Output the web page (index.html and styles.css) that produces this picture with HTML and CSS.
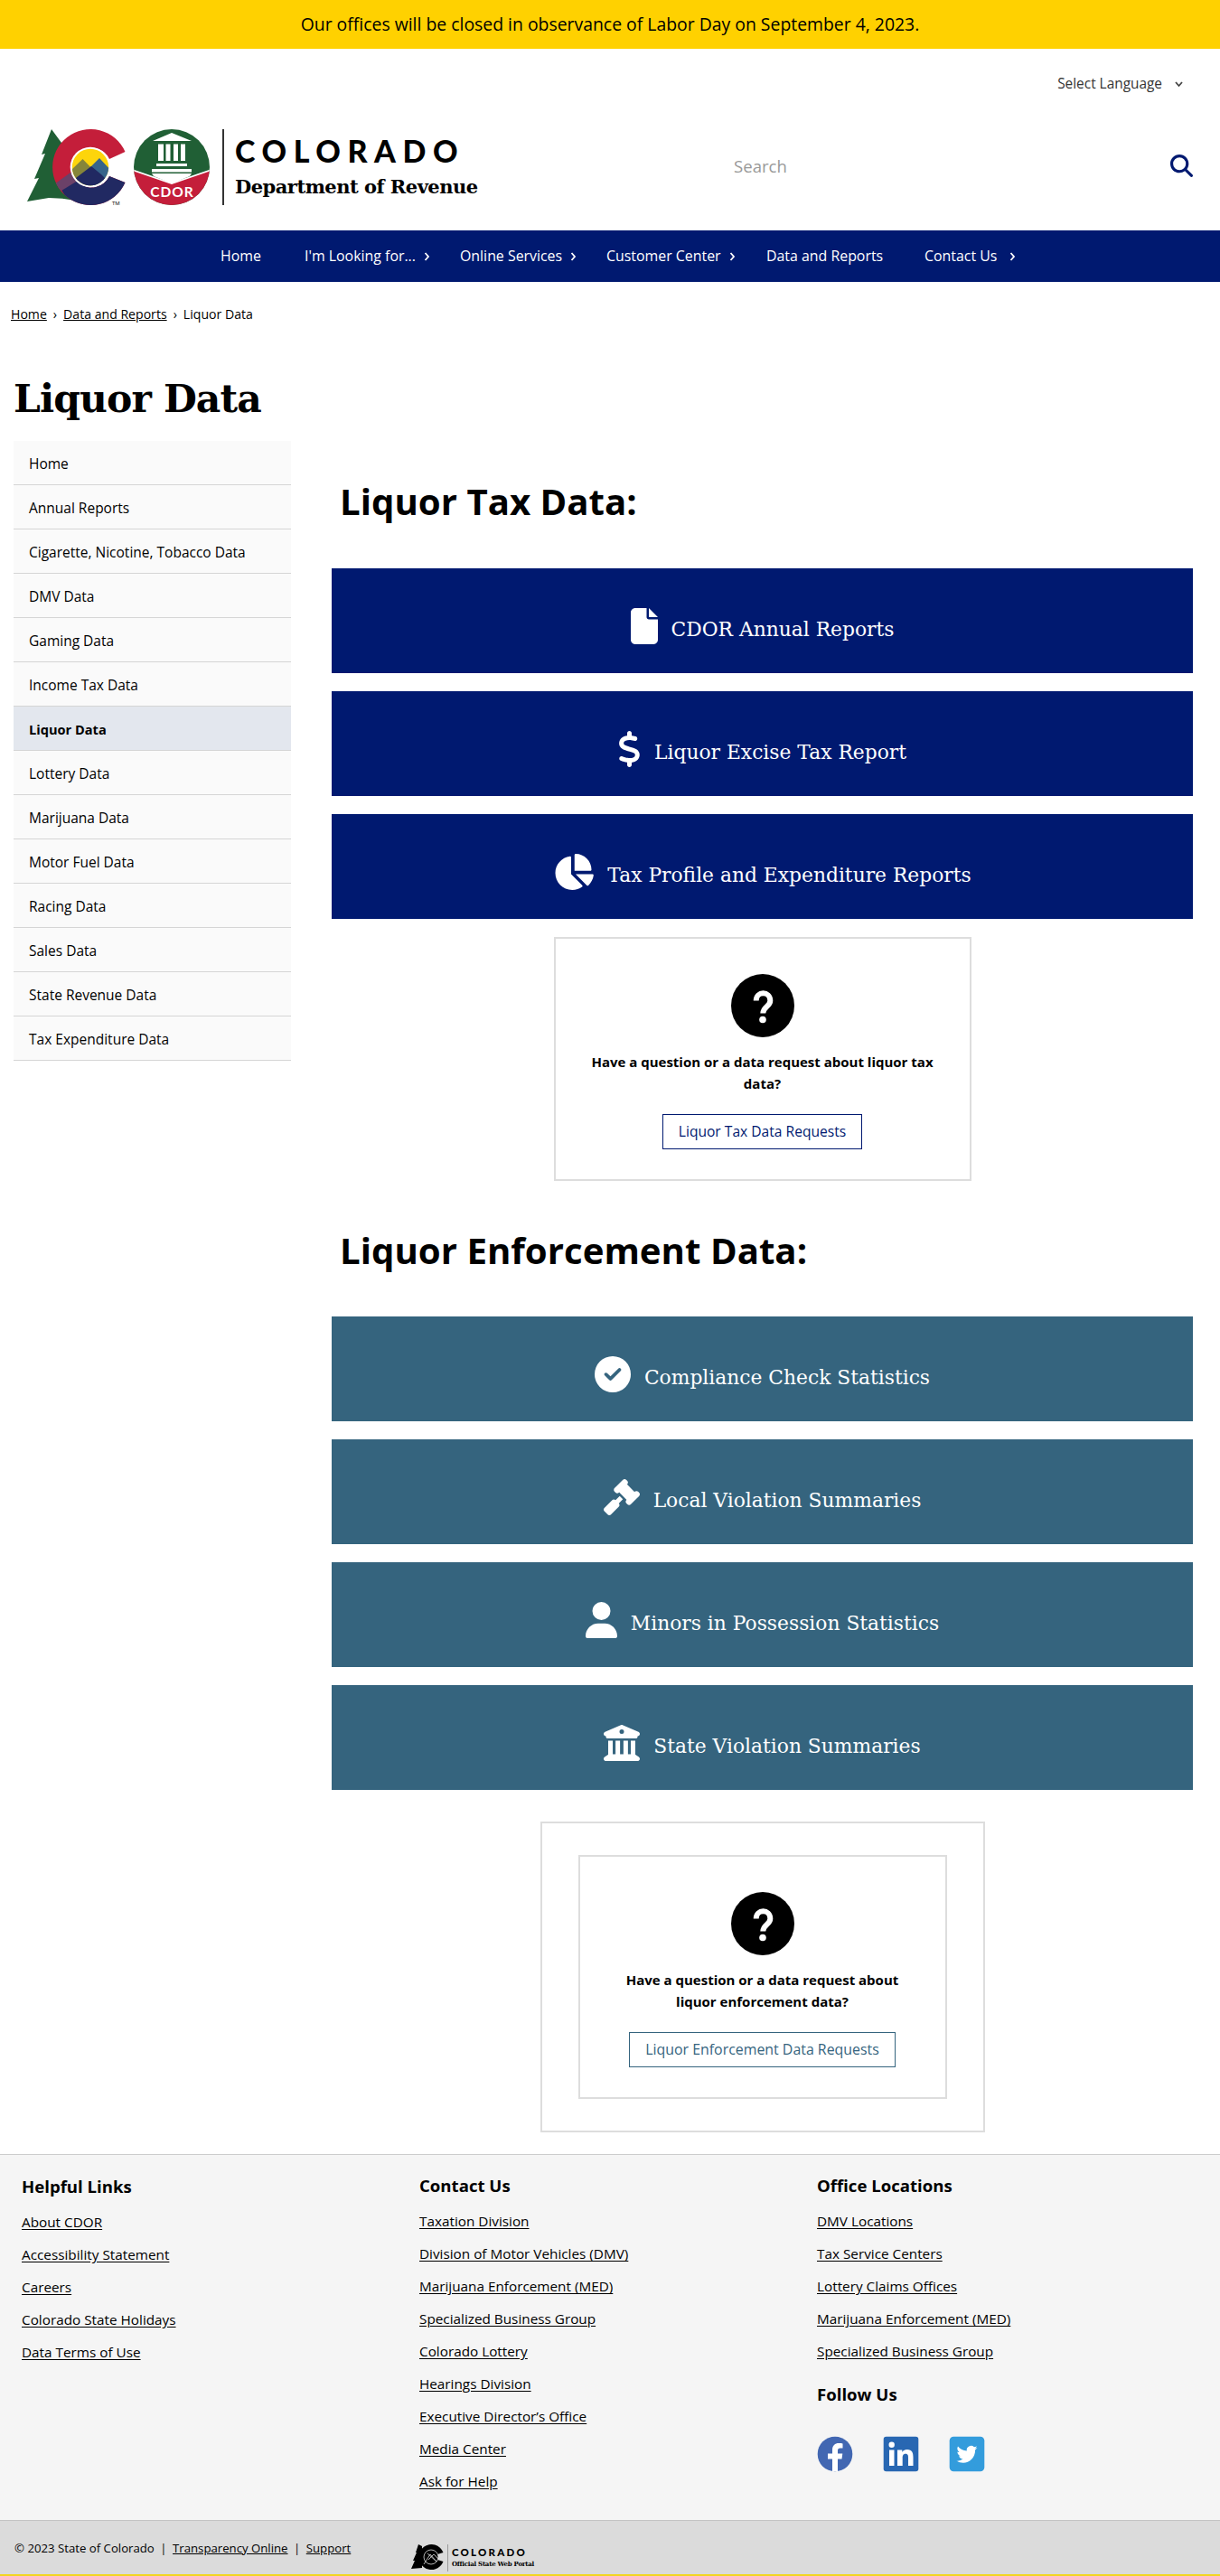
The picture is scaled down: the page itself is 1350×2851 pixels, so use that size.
FILE: index.html
```html
<!DOCTYPE html>
<html lang="en">
<head>
<meta charset="utf-8">
<title>Liquor Data | Department of Revenue</title>
<link rel="stylesheet" href="styles.css">
</head>
<body>
<div class="alert">Our offices will be closed in observance of Labor Day on September 4, 2023.</div>

<header class="header">
  <div class="language">Select Language
    <svg width="9" height="8" viewBox="0 0 9 8"><path d="M1 2l3.500 4L8 2" fill="none" stroke="#444" stroke-width="1.800"/></svg>
  </div>
  <div class="masthead">
    <a class="brand" href="#">
      <svg class="brand-marks" width="205" height="88" viewBox="0 0 205 88">
        <defs>
          <clipPath id="c-shape"><path d="M108.500 27A42 42 0 1 0 108.500 61L91 54A22 22 0 1 1 91 35Z"/></clipPath>
          <clipPath id="sun"><circle cx="70" cy="44" r="20.200"/></clipPath>
          <clipPath id="seal"><circle cx="160" cy="44" r="42"/></clipPath>
        </defs>
        <path d="M27 2L16 30l4-1L8 57l5-1L0 82l24-4q15 0 30 3L60 20 38 17Z" fill="#205f35"/>
        <g clip-path="url(#c-shape)">
          <path d="M20 0h95v90H20z" fill="#c41e3a"/>
          <path d="M112 46v44H50L38 69l15-10 20-13z" fill="#212962"/>
          <path d="M30 63l18-13 8 9-18 11z" fill="#6b4168"/>
        </g>
        <circle cx="70" cy="44" r="22.300" fill="#fff"/>
        <g clip-path="url(#sun)">
          <path d="M49 20h44v48H49z" fill="#fdd50b"/>
          <path d="M46 50l15.500-15L78 52v16H46z" fill="#85853a"/>
          <path d="M66 48l14-14 15 16v18H66z" fill="#36648b"/>
          <path d="M46 62l25-19 11 9 5 5 8 4v9H46z" fill="#212962"/>
        </g>
        <text x="94" y="86" class="tm">TM</text>
        <circle cx="160" cy="44" r="42" fill="#205f35"/>
        <g clip-path="url(#seal)">
          <path d="M116 47l44 15 44-15v45h-88z" fill="#c41e3a" stroke="#fff" stroke-width="1.700"/>
          <path d="M160 6l22 9h-43zM145 18.500h6V37h-6zM153.500 18.500h5V37h-5zM162 18.500h5V37h-5zM170 18.500h5V37h-5zM143 40h34v3h-34zM138 46h44v3.500h-44zM138 51h44l-2 3-20 8-20-8z" fill="#fff"/>
        </g>
        <text x="160.500" y="77" class="seal-text">CDOR</text>
      </svg>
      <span class="brand-rule"></span>
      <span class="brand-text">
        <span class="brand-state">COLORADO</span>
        <span class="brand-dept">Department of Revenue</span>
      </span>
    </a>
    <div class="search">
      <input class="search-input" type="text" placeholder="Search" aria-label="Search">
      <svg width="25" height="25" viewBox="0 0 512 512"><path fill="#001970" d="M416 208c0 45.900-14.900 88.300-40 122.700L502.600 457.400c12.500 12.500 12.500 32.800 0 45.300s-32.800 12.500-45.300 0L330.700 376c-34.400 25.200-76.800 40-122.700 40C93.100 416 0 322.900 0 208S93.100 0 208 0S416 93.100 416 208zM208 352a144 144 0 1 0 0-288 144 144 0 1 0 0 288z"/></svg>
    </div>
  </div>
</header>

<nav class="nav">
  <a href="#">Home</a>
  <a href="#">I'm Looking for...<svg class="chev" viewBox="0 0 7 10"><path d="M1.500 1l3.500 4-3.500 4"/></svg></a>
  <a href="#">Online Services<svg class="chev" viewBox="0 0 7 10"><path d="M1.500 1l3.500 4-3.500 4"/></svg></a>
  <a href="#">Customer Center<svg class="chev" viewBox="0 0 7 10"><path d="M1.500 1l3.500 4-3.500 4"/></svg></a>
  <a href="#">Data and Reports</a>
  <a href="#">Contact Us<svg class="chev chev-far" viewBox="0 0 7 10"><path d="M1.500 1l3.500 4-3.500 4"/></svg></a>
</nav>

<div class="crumbs"><a href="#">Home</a><span>›</span><a href="#">Data and Reports</a><span>›</span>Liquor Data</div>

<h1 class="title">Liquor Data</h1>

<div class="layout">
  <ul class="sidebar">
    <li>Home</li>
    <li>Annual Reports</li>
    <li>Cigarette, Nicotine, Tobacco Data</li>
    <li>DMV Data</li>
    <li>Gaming Data</li>
    <li>Income Tax Data</li>
    <li class="active">Liquor Data</li>
    <li>Lottery Data</li>
    <li>Marijuana Data</li>
    <li>Motor Fuel Data</li>
    <li>Racing Data</li>
    <li>Sales Data</li>
    <li>State Revenue Data</li>
    <li>Tax Expenditure Data</li>
  </ul>

  <main class="content">
    <h2 class="section-title">Liquor Tax Data:</h2>
    <div class="cards">
      <a class="card" href="#">
        <svg width="30" height="40" viewBox="0 0 384 512"><path d="M0 64C0 28.700 28.700 0 64 0H224V128c0 17.700 14.300 32 32 32H384V448c0 35.300-28.700 64-64 64H64c-35.300 0-64-28.700-64-64V64zm384 64H256V0L384 128z"/></svg>
        <span>CDOR Annual Reports</span>
      </a>
      <a class="card" href="#">
        <svg width="25" height="40" viewBox="0 0 320 512"><path d="M160 0c17.700 0 32 14.300 32 32V67.700c1.600 .2 3.100 .4 4.700 .7c.4 .1 .7 .1 1.100 .2l48 8.800c17.400 3.200 28.900 19.900 25.700 37.200s-19.900 28.900-37.200 25.700l-47.500-8.700c-31.300-4.600-58.900-1.500-78.300 6.200s-27.200 18.300-29 28.100c-2 10.700-.5 16.700 1.200 20.400c1.800 3.900 5.500 8.300 12.800 13.200c16.300 10.700 41.300 17.700 73.700 26.300l2.900 .8c28.600 7.600 63.600 16.800 89.600 33.800c14.200 9.300 27.600 21.900 35.900 39.500c8.500 17.900 10.300 37.900 6.400 59.200c-6.900 38-33.100 63.400-65.600 76.700c-13.700 5.600-28.600 9.200-44.400 11V480c0 17.700-14.300 32-32 32s-32-14.300-32-32V445.100c-.4-.1-.9-.1-1.300-.2l-.2 0 0 0c-24.400-3.800-64.500-14.300-91.500-26.300c-16.100-7.200-23.400-26.100-16.200-42.200s26.100-23.400 42.200-16.200c20.900 9.300 55.300 18.500 75.200 21.600c31.900 4.700 58.200 2 76-5.300c16.900-6.900 24.600-16.900 26.800-28.900c1.900-10.600 .4-16.700-1.300-20.400c-1.900-4-5.600-8.400-13-13.300c-16.400-10.700-41.500-17.700-74-26.300l-2.800-.7 0 0C119.400 279.300 84.400 270 58.400 253c-14.200-9.300-27.500-22-35.800-39.600c-8.400-17.900-10.100-37.900-6.100-59.200C23.700 116 52.300 91.200 84.800 78.300c13.300-5.300 27.900-8.900 43.200-11V32c0-17.700 14.300-32 32-32z"/></svg>
        <span>Liquor Excise Tax Report</span>
      </a>
      <a class="card" href="#">
        <svg width="45" height="40" viewBox="0 0 576 512"><path d="M304 240V16.600c0-9 7-16.600 16-16.600C443.700 0 544 100.300 544 224c0 9-7.600 16-16.600 16H304zM32 272C32 150.700 122.100 50.300 239 34.300c9.200-1.300 17 6.100 17 15.400V288L412.500 444.500c6.700 6.700 6.200 17.700-1.500 23.100C371.800 495.600 323.800 512 272 512C139.500 512 32 404.600 32 272zm526.400 16c9.300 0 16.600 7.800 15.400 17c-7.700 55.900-34.600 105.600-73.900 142.300c-6 5.600-15.400 5.200-21.200-.7L320 288H558.400z"/></svg>
        <span>Tax Profile and Expenditure Reports</span>
      </a>
    </div>

    <div class="ask">
      <svg width="70" height="70" viewBox="0 0 70 70"><circle cx="35" cy="35" r="35"/><path d="M27.700 29.500c0-11 15.600-11 15.600 0c0 6.500-8 6.500-8 14" fill="none" stroke="#fff" stroke-width="6"/><circle cx="35" cy="50.500" r="3.800" fill="#fff"/></svg>
      <p>Have a question or a data request about liquor tax<br>data?</p>
      <a class="button" href="#">Liquor Tax Data Requests</a>
    </div>

    <h2 class="section-title second">Liquor Enforcement Data:</h2>
    <div class="cards teal">
      <a class="card" href="#">
        <svg width="40" height="40" viewBox="0 0 512 512"><path d="M256 512A256 256 0 1 0 256 0a256 256 0 1 0 0 512zM369 209L241 337c-9.400 9.400-24.600 9.400-33.900 0l-64-64c-9.400-9.400-9.400-24.600 0-33.900s24.600-9.400 33.900 0l47 47L335 175c9.400-9.400 24.600-9.400 33.900 0s9.400 24.600 0 33.900z"/></svg>
        <span>Compliance Check Statistics</span>
      </a>
      <a class="card" href="#">
        <svg width="40" height="40" viewBox="0 0 512 512"><path d="M318.600 9.400c-12.500-12.500-32.800-12.500-45.300 0l-120 120c-12.500 12.500-12.500 32.800 0 45.300l16 16c12.500 12.500 32.800 12.500 45.300 0l4-4L325.400 293.400l-4 4c-12.500 12.500-12.500 32.800 0 45.300l16 16c12.500 12.500 32.800 12.500 45.300 0l120-120c12.500-12.500 12.500-32.800 0-45.300l-16-16c-12.500-12.500-32.800-12.500-45.300 0l-4 4L330.600 74.600l4-4c12.500-12.500 12.500-32.800 0-45.300l-16-16zm-152 288c-12.500-12.500-32.800-12.500-45.300 0l-112 112c-12.500 12.500-12.500 32.800 0 45.300l48 48c12.500 12.500 32.800 12.500 45.300 0l112-112c12.500-12.500 12.500-32.800 0-45.300l-1.400-1.400L272 285.300 226.700 240 168 298.700l-1.400-1.400z"/></svg>
        <span>Local Violation Summaries</span>
      </a>
      <a class="card" href="#">
        <svg width="35" height="40" viewBox="0 0 448 512"><path d="M224 256A128 128 0 1 0 224 0a128 128 0 1 0 0 256zm-45.700 48C79.800 304 0 383.800 0 482.300C0 498.700 13.300 512 29.700 512H418.300c16.400 0 29.700-13.300 29.700-29.700C448 383.800 368.200 304 269.700 304H178.300z"/></svg>
        <span>Minors in Possession Statistics</span>
      </a>
      <a class="card" href="#">
        <svg width="40" height="40" viewBox="0 0 512 512"><path d="M243.400 2.600l-224 96c-14 6-21.800 21-18.700 35.800S16.800 160 32 160v8c0 13.300 10.700 24 24 24H456c13.300 0 24-10.700 24-24v-8c15.200 0 28.300-10.700 31.300-25.600s-4.800-29.900-18.700-35.800l-224-96c-8-3.400-17.200-3.400-25.200 0zM128 224H64V420.300c-.6 .3-1.200 .7-1.800 1.100l-48 32c-11.700 7.800-17 22.400-12.900 35.900S17.900 512 32 512H480c14.100 0 26.500-9.200 30.600-22.700s-1.100-28.100-12.900-35.900l-48-32c-.6-.4-1.200-.7-1.800-1.100V224H384V416H344V224H280V416H232V224H168V416H128V224zM256 64a32 32 0 1 1 0 64 32 32 0 1 1 0-64z"/></svg>
        <span>State Violation Summaries</span>
      </a>
    </div>

    <div class="ask-frame">
      <div class="ask">
        <svg width="70" height="70" viewBox="0 0 70 70"><circle cx="35" cy="35" r="35"/><path d="M27.700 29.500c0-11 15.600-11 15.600 0c0 6.500-8 6.500-8 14" fill="none" stroke="#fff" stroke-width="6"/><circle cx="35" cy="50.500" r="3.800" fill="#fff"/></svg>
        <p>Have a question or a data request about<br>liquor enforcement data?</p>
        <a class="button button-teal" href="#">Liquor Enforcement Data Requests</a>
      </div>
    </div>
  </main>
</div>

<footer class="footer">
  <div class="footer-col first">
    <h3>Helpful Links</h3>
    <a href="#">About CDOR</a>
    <a href="#">Accessibility Statement</a>
    <a href="#">Careers</a>
    <a href="#">Colorado State Holidays</a>
    <a href="#">Data Terms of Use</a>
  </div>
  <div class="footer-col">
    <h3>Contact Us</h3>
    <a href="#">Taxation Division</a>
    <a href="#">Division of Motor Vehicles (DMV)</a>
    <a href="#">Marijuana Enforcement (MED)</a>
    <a href="#">Specialized Business Group</a>
    <a href="#">Colorado Lottery</a>
    <a href="#">Hearings Division</a>
    <a href="#">Executive Director’s Office</a>
    <a href="#">Media Center</a>
    <a href="#">Ask for Help</a>
  </div>
  <div class="footer-col">
    <h3>Office Locations</h3>
    <a href="#">DMV Locations</a>
    <a href="#">Tax Service Centers</a>
    <a href="#">Lottery Claims Offices</a>
    <a href="#">Marijuana Enforcement (MED)</a>
    <a href="#">Specialized Business Group</a>
    <h3 class="follow">Follow Us</h3>
    <div class="social">
      <svg width="40" height="40" viewBox="0 0 40 40"><circle cx="20" cy="20" r="19.300" fill="#4267b2"/><path d="M17 39V25.500h-5V19.500h5V15.500c0-5 3-7.500 7.200-7.500 1.700 0 3.300.2 4.300.4v5h-2.600c-2.300 0-2.900 1.200-2.900 2.700v3.400h5.300l-.8 6H23V39z" fill="#fff"/></svg>
      <svg width="40" height="40" viewBox="0 0 40 40"><rect x=".7" y=".7" width="38.600" height="38.600" rx="3" fill="#2867b2"/><path d="M7 15.500h5.500V33H7zM9.700 6.500a3.200 3.200 0 1 1 0 6.400 3.200 3.200 0 0 1 0-6.400zM16 15.500h5.300v2.400c.8-1.500 2.700-2.900 5.500-2.900 5.600 0 6.700 3.600 6.700 8.400V33H28v-8.500c0-2.200 0-4.800-2.900-4.800s-3.400 2.300-3.400 4.600V33H16z" fill="#fff"/></svg>
      <svg width="40" height="40" viewBox="0 0 40 40"><rect x=".7" y=".7" width="38.600" height="38.600" rx="4.500" fill="#339cdc"/><path d="M31.500 13c-.9.400-1.800.6-2.700.8 1-.6 1.700-1.500 2.100-2.600-.9.500-1.900.9-3 1.100a4.800 4.800 0 0 0-8.100 4.300c-4-.2-7.500-2.100-9.800-5-1.300 2.200-.6 5 1.500 6.400-.8 0-1.500-.2-2.100-.6 0 2.300 1.600 4.300 3.800 4.800-.7.200-1.400.2-2.100.1.600 1.900 2.300 3.300 4.400 3.300A9.600 9.600 0 0 1 8.400 27.600c9.300 5.800 20.900-.5 20.700-12.100.9-.7 1.700-1.500 2.400-2.500z" fill="#fff"/></svg>
    </div>
  </div>
</footer>

<div class="legal">
  <div class="legal-text">© 2023 State of Colorado<i>|</i><a href="#">Transparency Online</a><i>|</i><a href="#">Support</a></div>
  <a class="portal" href="#">
    <svg width="36" height="28" viewBox="0 0 36 28"><path d="M8 0L5 9l1 0L2 18l2 0L0 27l12-1V2z"/><path d="M35.500 9A14 14 0 1 0 35.500 19L29 17A7.500 7.500 0 1 1 29 11Z"/><circle cx="22" cy="14" r="8" stroke="#ddd" stroke-width=".8"/><path d="M14 22L21 11l7 8M19 17l6-6 5 5M18 10l10 9" stroke="#ddd" stroke-width=".8" fill="none"/></svg>
    <span class="portal-rule"></span>
    <span class="portal-text"><b>COLORADO</b><small>Official State Web Portal</small></span>
  </a>
</div>
</body>
</html>
```
FILE: styles.css
```css
* { box-sizing: border-box; }
body { margin: 0; background: #fff; color: #000; font-family: "Open Sans", "Noto Sans", sans-serif; }
a { color: inherit; }
svg { display: block; flex: none; }

.alert { height: 54px; background: #ffd100; text-align: center; font-size: 19.4px; line-height: 54px; }

/* Header */
.header { height: 201px; }
.language { display: flex; align-items: center; justify-content: flex-end; gap: 14px; height: 89px; padding: 0 41px 12px 0; font-size: 15.4px; color: #333; }
.masthead { display: flex; justify-content: space-between; align-items: flex-start; padding: 0 30px; }
.brand { display: flex; align-items: flex-start; height: 86px; margin-top: -2px; text-decoration: none; }
.brand-rule { width: 2px; height: 84px; margin: 2px 12px 0 11px; background: #333; }
.tm { font: 6px "Open Sans", sans-serif; }
.seal-text { font: 700 15.5px Lato, sans-serif; fill: #fff; letter-spacing: 1px; text-anchor: middle; }
.brand-text { display: flex; flex-direction: column; }
.brand-state { height: 49px; padding-top: 6px; font: 900 34px/40px Lato, sans-serif; letter-spacing: 7.600px; }
.brand-dept { font: 700 21px/34px "DejaVu Serif", serif; letter-spacing: -.500px; }
.search { display: flex; align-items: center; width: 508px; height: 81px; justify-content: space-between; }
.search-input { width: 300px; padding: 0; border: 0; outline: 0; background: none; font: 18.6px "Open Sans", sans-serif; }
.search-input::placeholder { color: #999; opacity: 1; }

/* Main navigation */
.nav { display: grid; grid-template-columns: 93px 172px 162px 177px 175px 104px; height: 57px; padding-left: 244px; background: #001970; }
.nav a { display: flex; align-items: center; color: #fff; font-size: 15.900px; text-decoration: none; white-space: nowrap; padding-bottom: 1px; }
.chev { width: 7px; height: 10px; margin: 2px 0 0 9px; fill: none; stroke: #fff; stroke-width: 1.800; }
.chev-far { margin-left: 14px; }

.crumbs { display: flex; height: 72px; padding-left: 12px; font-size: 14.1px; line-height: 71px; }
.crumbs span { padding: 0 7px; }
.title { height: 104px; margin: 0; padding-left: 15px; font: 700 42.500px/115px "DejaVu Serif", serif; letter-spacing: -.900px; }

/* Two-column body */
.layout { display: flex; align-items: flex-start; gap: 45px; height: 1896px; padding-left: 15px; }
.sidebar { width: 307px; margin: 0; padding: 0; list-style: none; }
.sidebar li { height: 49px; padding-left: 17px; border-bottom: 1px solid #d5d5d5; background: #fafafa; font-size: 15.5px; line-height: 50px; }
.sidebar .active { background: #e3e7ee; font-size: 14.6px; font-weight: 700; }
.content { width: 953px; }
.section-title { height: 141px; margin: 0; padding: 26px 0 0 9px; font-size: 40.200px; line-height: 82px; font-weight: 700; }
.section-title.second { height: 150px; padding-top: 36px; }
.cards { display: flex; flex-direction: column; gap: 20px; }
.card { display: flex; justify-content: center; height: 116px; padding-top: 44px; background: #001970; color: #fff; text-decoration: none; font: 21.800px/40px "DejaVu Serif", serif; }
.card svg { margin-right: 15px; fill: #fff; }
.card span { padding-top: 4px; }
.teal .card { background: #35647e; }
.ask { width: 462px; height: 270px; margin: 20px auto 0; padding-top: 39px; border: 2px solid #ddd; display: flex; flex-direction: column; align-items: center; }
.ask p { margin: 15px 0 22px; font-size: 15px; line-height: 24px; font-weight: 700; text-align: center; white-space: nowrap; }
.button { height: 39px; padding: 0 17px; border: 1.500px solid #001970; color: #001970; font-size: 15.600px; line-height: 36px; text-decoration: none; }
.button-teal { border-color: #35647e; color: #35647e; font-size: 15.900px; }
.ask-frame { width: 492px; height: 344px; margin: 35px auto 0; padding-top: 35px; border: 2px solid #ddd; }
.ask-frame .ask { width: 408px; margin-top: 0; }

/* Footer */
.footer { display: grid; grid-template-columns: 440px 440px 1fr; height: 405px; padding: 14px 0 0 24px; border-top: 1px solid #ccc; background: #f5f5f5; }
.footer-col { display: flex; flex-direction: column; align-items: flex-start; }
.footer-col.first { padding-top: 1px; }
.footer h3 { margin: 0 0 1px; font-size: 18.600px; line-height: 40px; }
.footer-col > a { font-size: 15.300px; line-height: 36px; text-underline-offset: 2px; }
.footer h3.follow { margin-top: 10px; }
.social { display: flex; gap: 33px; margin-top: 25px; }
.legal { display: flex; height: 62px; border-top: 1px solid #c4c4c4; border-bottom: 2px solid #f3d51f; background: #dbdbdb; padding-left: 16px; }
.legal-text { width: 439px; font-size: 13.200px; line-height: 61px; }
.legal-text i { padding: 0 6.500px; font-style: normal; }
.portal { display: flex; height: 30px; margin-top: 26px; text-decoration: none; }
.portal-rule { width: 1px; height: 30px; margin: 0 4px; background: #999; }
.portal-text { display: flex; flex-direction: column; }
.portal-text b { font: 900 11.500px/15px Lato, sans-serif; letter-spacing: 2.200px; padding-top: 1px; }
.portal-text small { font: 700 7px/12px "DejaVu Serif", serif; letter-spacing: -.250px; }
```
